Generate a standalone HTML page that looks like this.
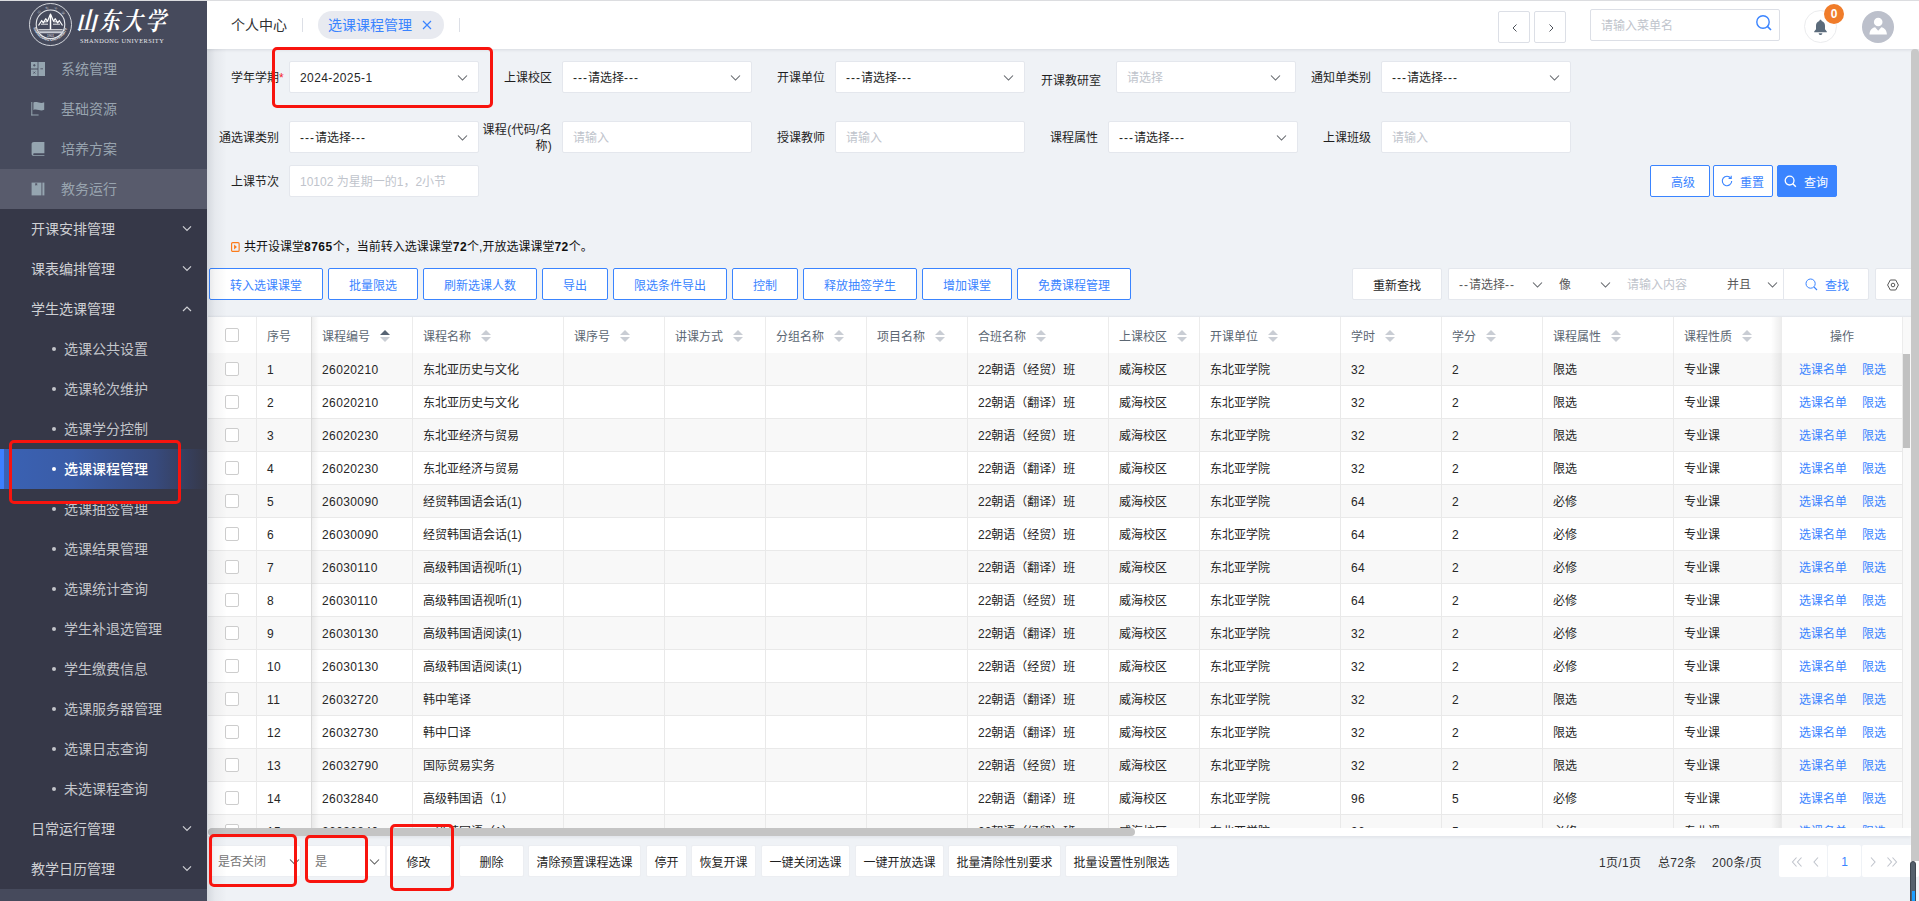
<!DOCTYPE html>
<html lang="zh-CN"><head><meta charset="utf-8"><title>选课课程管理</title>
<style>
*{box-sizing:border-box;margin:0;padding:0}
html,body{width:1919px;height:901px;overflow:hidden}
body{position:relative;background:#eff2f6;font-family:"Liberation Sans","Noto Sans CJK SC",sans-serif;font-size:12px;color:#262626}
.abs{position:absolute}
/* sidebar */
#side{position:absolute;left:0;top:0;width:207px;height:901px;background:#464a5c;overflow:hidden;z-index:30}
#sideshadow{position:absolute;left:207px;top:49px;width:20px;height:852px;background:linear-gradient(90deg,rgba(0,10,30,.11),rgba(0,10,30,.04) 40%,rgba(0,10,30,0));z-index:20}
#topline{position:absolute;left:0;top:0;width:1919px;height:1px;background:#dcdde0;z-index:50}
.logo-c{position:absolute;left:29px;top:3px;width:43px;height:43px}
.logo-t{position:absolute;left:77px;top:5px;width:96px;height:32px;color:#fff;font-family:"Liberation Serif","Noto Serif CJK SC",serif;font-weight:700;font-size:20px;line-height:32px;white-space:nowrap;transform:skewX(-14deg) scaleY(1.25);transform-origin:50% 50%}
.logo-t span{display:inline-block;width:23px;text-align:center}
.logo-e{position:absolute;left:80px;top:37px;width:88px;color:#e6e8ec;font-family:"Liberation Serif",serif;font-weight:normal;font-size:6.3px;line-height:8px;white-space:nowrap;letter-spacing:.5px}
.m1{position:absolute;left:0;width:207px;height:40px;color:#98a4af;font-size:14px;line-height:40px}
.m1 svg{position:absolute;left:31px;top:13px;width:14px;height:14px}
.m1 span{position:absolute;left:61px;top:0}
.m1.act{background:#585b6c}
#sub{position:absolute;left:0;top:209px;width:207px;height:680px;background:#363848}
.m2{position:absolute;left:0;width:207px;height:40px;color:#cfd0d4;font-size:14px;line-height:40px}
.m2 span{position:absolute;left:31px;top:0}
.m2 svg{position:absolute;left:182px;top:15px;width:10px;height:10px}
.m3{position:absolute;left:0;width:207px;height:40px;color:#c3c5ca;font-size:14px;line-height:40px}
.m3 span{position:absolute;left:64px;top:0}
.m3 i{position:absolute;left:52px;top:18px;width:4px;height:4px;border-radius:50%;background:#c3c5ca}
.m3.act{color:#fff;font-weight:500;background:linear-gradient(90deg,#3a62b5 0%,#3a5ca6 35%,#374a7d 75%,#363848 100%)}
.m3.act i{background:#fff}
.m3.act b{position:absolute;left:0;top:0;width:4px;height:40px;background:#3d7fff}
/* header */
#hdr{position:absolute;left:207px;top:0;width:1712px;height:49px;background:#fff;box-shadow:0 1px 3px rgba(0,21,41,.10)}
.tab0{position:absolute;left:24px;top:0;line-height:50px;font-size:14px;color:#303133}
.vsep{position:absolute;top:18px;width:1px;height:14px;background:#dcdfe6}
.tab1{position:absolute;left:111px;top:11px;width:126px;height:28px;border-radius:14px;background:#e8eaf0;color:#3a84ff;font-size:14px;line-height:28px;padding-left:10px;white-space:nowrap}
.navb{position:absolute;top:11px;width:32px;height:32px;border:1px solid #dcdfe6;border-radius:2px;background:#fff}
.navb svg{position:absolute;left:10px;top:10px;width:12px;height:12px}
.msearch{position:absolute;left:1383px;top:9px;width:190px;height:32px;border:1px solid #dcdfe6;border-radius:2px;background:#fff;color:#c0c4cc;font-size:12px;line-height:32px;padding-left:10px}
.msearch svg{position:absolute;left:164px;top:4px;width:18px;height:18px}
.bell{position:absolute;left:1597px;top:10px;width:33px;height:33px;border:1px solid #ebecee;border-radius:50%;background:#fff}
.bell svg{position:absolute;left:8px;top:8px;width:15px;height:17px}
.badge{position:absolute;left:1617px;top:4px;width:20px;height:20px;border-radius:50%;background:#f07c2a;color:#fff;font-size:12px;font-weight:bold;line-height:20px;text-align:center}
.avatar{position:absolute;left:1655px;top:11px;width:32px;height:32px;border-radius:50%;background:#bcc0cb;overflow:hidden}
/* filters */
.lbl{position:absolute;font-size:12px;color:#1f1f1f;line-height:16px;text-align:right;white-space:nowrap}
.fld{position:absolute;height:32px;width:190px;background:#fff;border:1px solid #e4e7ed;border-radius:2px;font-size:12px;line-height:32px;padding-left:10px;color:#262626;white-space:nowrap}
.fld.ph{color:#c0c4cc}
.fld svg.dn{position:absolute;right:10px;top:10px;width:11px;height:11px}
.btn{position:absolute;height:32px;border:1px solid #3a84ff;border-radius:2px;background:#fff;color:#3a84ff;font-size:12px;line-height:30px;padding-top:2px;text-align:center;white-space:nowrap}
.btn.pri{background:#3a84ff;color:#fff}
.btn.def{border-color:#e4e7ed;color:#1f1f1f}
.info{position:absolute;left:244px;top:239px;font-size:12px;line-height:16px;color:#111;white-space:nowrap}
.info b{font-weight:bold;letter-spacing:.5px}
/* table */
.tablewrap{position:absolute;left:208px;top:317px;width:1695px;height:511px;overflow:hidden;background:#fff}
#tblshadow{position:absolute;left:208px;top:315px;width:1703px;height:2px;background:linear-gradient(180deg,rgba(0,10,30,0),rgba(0,10,30,.06))}
table.grid{border-collapse:separate;border-spacing:0;table-layout:fixed;width:1695px}
.grid th{height:36px;line-height:16px;padding-top:3px;background:#fff;color:#5c6773;font-weight:normal;font-size:12px;text-align:left;padding-left:10px;border-right:1px solid #ececec;border-bottom:0;white-space:nowrap;position:relative}
.grid td{height:33px;line-height:16px;padding-top:2px;font-size:12px;color:#262626;padding-left:10px;border-right:1px solid #e9e9e9;border-bottom:1px solid #e9e9e9;white-space:nowrap;overflow:hidden}
.grid tr.odd td{background:#f8f8f8}
.grid tr.even td{background:#fff}
.grid .ck{padding-left:0;text-align:center}
.cb{position:relative;top:-2px;display:inline-block;width:14px;height:14px;border:1px solid #cdcdcd;border-radius:2px;background:#fff;vertical-align:middle}
.grid th.op{text-align:center;padding-left:0}
.grid td.op{padding-left:17px;color:#3a84ff}
.grid td.op a{margin-right:15px}
.sort{display:inline-block;position:relative;width:10px;height:14px;margin-left:10px;vertical-align:-3px}
.sort i{position:absolute;left:0;width:0;height:0;border-left:5px solid transparent;border-right:5px solid transparent}
.sort .su{top:0px;border-bottom:5.5px solid #c9cdd4}
.sort .sd{top:7.5px;border-top:5.5px solid #c9cdd4}
.red{position:absolute;border:3px solid #f8140e;border-radius:5px;z-index:60}
.hy{letter-spacing:1px}
.nm{letter-spacing:.4px}

</style></head><body>
<div id="topline"></div>
<div id="side">
<svg class="logo-c" viewBox="0 0 43 43"><defs><path id="ringb" d="M4.300 22.500A17.300 17.300 0 0 0 38.700 22.500"/><path id="ringt" d="M6.200 17.500A16 16 0 0 1 36.800 17.500"/></defs><circle cx="21.500" cy="21.500" r="21" fill="none" stroke="#e3e5ea" stroke-width=".9"/><circle cx="21.500" cy="21.300" r="14.300" fill="none" stroke="#e3e5ea" stroke-width="1.100"/><text font-family="Liberation Sans,sans-serif" font-size="3.700" font-weight="bold" fill="#f0f1f4" letter-spacing=".05"><textPath href="#ringb" startOffset="2">SHANDONG UNIVERSITY</textPath></text><text font-family="Noto Serif CJK SC,serif" font-size="3.600" fill="#d5d8df" letter-spacing="4.500"><textPath href="#ringt" startOffset="7">山东大学</textPath></text><path d="M9.500 22.500l3.200-5 1.600 2.400 2.400-4.200 1.800 2.600 3-7.300 3 7.300 1.800-2.600 2.400 4.200 1.600-2.400 3.200 5" fill="none" stroke="#fff" stroke-width="1.200" stroke-linejoin="round"/><path d="M12 21.200h7M24 21.200h7M14.500 18.800h4M24.500 18.800h4" stroke="#fff" stroke-width=".9" fill="none"/><path d="M21.500 12.500V26.500" stroke="#fff" stroke-width="1.500"/><path d="M9.300 26.800H33.700" stroke="#fff" stroke-width="1"/><path d="M9.800 28.300H33.200V30.200H11z" fill="#c9ccd5"/><text x="21.500" y="34.300" text-anchor="middle" font-family="Liberation Sans,sans-serif" font-size="3.200" fill="#e3e5ea">1901</text></svg>
<div class="logo-t"><span>山</span><span>东</span><span>大</span><span>学</span></div>
<div class="logo-e">SHANDONG UNIVERSITY</div>
<div class="m1" style="top:49px"><svg viewBox="0 0 14 14"><path d="M0 0h6.6v6.6H0zM7.4 0H14v14H7.4zM0 7.4h6.6V14H0z" fill="#95a5b0"/><path d="M2 3.3h2.6M3.3 2v2.6M9.4 6.8h2.6M2.3 9.6l2 2M4.3 9.6l-2 2" stroke="#464a5c" stroke-width=".8" fill="none"/></svg><span>系统管理</span></div>
<div class="m1" style="top:89px"><svg viewBox="0 0 14 14"><path d="M0.8 0V13.4" stroke="#95a5b0" stroke-width="1" fill="none"/><path d="M0.3 13H7.6" stroke="#95a5b0" stroke-width="1" fill="none"/><path d="M2.4 0.4c2-.9 3.6-.4 5.4.1 1.8.5 3.6.6 5.4-.3v7.6c-1.8.9-3.6.8-5.4.3-1.8-.5-3.400-1-5.400-.1z" fill="#95a5b0"/></svg><span>基础资源</span></div>
<div class="m1" style="top:129px"><svg viewBox="0 0 14 14"><path d="M3 0h10.4v11.2H3.4c-.9 0-1.2.5-1.2 1 0 .6.4 1 1.2 1h10v.8H3c-1.5 0-2.4-.8-2.4-2V2C.6.8 1.5 0 3 0z" fill="#95a5b0"/></svg><span>培养方案</span></div>
<div class="m1 act" style="top:169px"><svg viewBox="0 0 14 14"><path d="M0.6 0.6h9.8v12.8H0.6z" fill="#95a5b0"/><path d="M11.4 0.6h2v12.8h-2z" fill="#95a5b0"/><path d="M4.2 1.2v2.6l1-.8 1 .8V1.2z" fill="#585b6c"/></svg><span>教务运行</span></div>
<div id="sub"></div>
<div class="m2" style="top:209px"><span>开课安排管理</span><svg viewBox="0 0 10 10"><path d="M1 2.300l4 4 4-4" fill="none" stroke="#cfd0d4" stroke-width="1.200"/></svg></div>
<div class="m2" style="top:249px"><span>课表编排管理</span><svg viewBox="0 0 10 10"><path d="M1 2.300l4 4 4-4" fill="none" stroke="#cfd0d4" stroke-width="1.200"/></svg></div>
<div class="m2" style="top:289px"><span>学生选课管理</span><svg viewBox="0 0 10 10"><path d="M1 7l4-4 4 4" fill="none" stroke="#cfd0d4" stroke-width="1.200"/></svg></div>
<div class="m3" style="top:329px"><i></i><span>选课公共设置</span></div>
<div class="m3" style="top:369px"><i></i><span>选课轮次维护</span></div>
<div class="m3" style="top:409px"><i></i><span>选课学分控制</span></div>
<div class="m3 act" style="top:449px"><b></b><i></i><span>选课课程管理</span></div>
<div class="m3" style="top:489px"><i></i><span>选课抽签管理</span></div>
<div class="m3" style="top:529px"><i></i><span>选课结果管理</span></div>
<div class="m3" style="top:569px"><i></i><span>选课统计查询</span></div>
<div class="m3" style="top:609px"><i></i><span>学生补退选管理</span></div>
<div class="m3" style="top:649px"><i></i><span>学生缴费信息</span></div>
<div class="m3" style="top:689px"><i></i><span>选课服务器管理</span></div>
<div class="m3" style="top:729px"><i></i><span>选课日志查询</span></div>
<div class="m3" style="top:769px"><i></i><span>未选课程查询</span></div>
<div class="m2" style="top:809px"><span>日常运行管理</span><svg viewBox="0 0 10 10"><path d="M1 2.300l4 4 4-4" fill="none" stroke="#cfd0d4" stroke-width="1.200"/></svg></div>
<div class="m2" style="top:849px"><span>教学日历管理</span><svg viewBox="0 0 10 10"><path d="M1 2.300l4 4 4-4" fill="none" stroke="#cfd0d4" stroke-width="1.200"/></svg></div>
</div>
<div id="hdr">
<div class="tab0">个人中心</div>
<div class="vsep" style="left:95px"></div>
<div class="tab1">选课课程管理<svg style="position:absolute;left:104px;top:9px;width:10px;height:10px" viewBox="0 0 10 10"><path d="M1 1l8 8M9 1l-8 8" stroke="#3a84ff" stroke-width="1.2" fill="none"/></svg></div>
<div class="vsep" style="left:252px"></div>
<div class="navb" style="left:1291px"><svg viewBox="0 0 12 12"><path d="M7.5 2.5L4 6l3.5 3.5" fill="none" stroke="#50555d" stroke-width="1"/></svg></div>
<div class="navb" style="left:1327px"><svg viewBox="0 0 12 12"><path d="M4.5 2.5L8 6 4.5 9.5" fill="none" stroke="#50555d" stroke-width="1"/></svg></div>
<div class="msearch">请输入菜单名<svg viewBox="0 0 18 18"><circle cx="8" cy="8" r="6.2" fill="none" stroke="#3a84ff" stroke-width="1.4"/><path d="M12.6 12.6L16 16" stroke="#3a84ff" stroke-width="1.6" fill="none"/></svg></div>
<div class="bell"><svg viewBox="0 0 15 17"><path d="M7.5 0.8c.7 0 1.1.5 1.1 1.1 2.2.6 3.4 2.4 3.4 4.8v3.6l1.8 2.2v.7H1.2v-.7L3 10.3V6.7c0-2.4 1.200-4.200 3.400-4.800 0-.6.400-1.100 1.100-1.100z" fill="#5b6b7b"/><path d="M5.700 14.200h3.600c0 1-.8 1.800-1.800 1.800s-1.800-.8-1.800-1.800z" fill="#5b6b7b"/></svg></div>
<div class="badge">0</div>
<div class="avatar"><svg viewBox="0 0 32 32" width="32" height="32"><circle cx="16.200" cy="11" r="4.300" fill="#fff"/><path d="M7.500 23.500c0-4 2.500-6.600 5.600-7.200l3.100 3.400 3.100-3.400c3.100.6 5.600 3.200 5.600 7.200z" fill="#fff"/></svg></div>
</div>
<div class="lbl" style="right:1640px;top:70px">学年学期</div>
<div class="lbl" style="left:279px;top:70px;color:#f5222d">*</div>
<div class="fld" style="left:289px;top:61px;width:190px"><span class="nm">2024-2025-1</span><svg class="dn" viewBox="0 0 11 11"><path d="M1 3.500l4.500 4.500 4.500-4.500" fill="none" stroke="#5f6368" stroke-width="1.05"/></svg></div>
<div class="lbl" style="right:1367px;top:70px">上课校区</div>
<div class="fld" style="left:562px;top:61px;width:190px"><span class="hy">---</span>请选择<span class="hy">---</span><svg class="dn" viewBox="0 0 11 11"><path d="M1 3.500l4.500 4.500 4.500-4.500" fill="none" stroke="#5f6368" stroke-width="1.05"/></svg></div>
<div class="lbl" style="right:1094px;top:70px">开课单位</div>
<div class="fld" style="left:835px;top:61px;width:190px"><span class="hy">---</span>请选择<span class="hy">---</span><svg class="dn" viewBox="0 0 11 11"><path d="M1 3.500l4.500 4.500 4.500-4.500" fill="none" stroke="#5f6368" stroke-width="1.05"/></svg></div>
<div class="lbl" style="right:818px;top:73px">开课教研室</div>
<div class="fld ph" style="left:1116px;top:61px;width:180px">请选择<svg class="dn" style="right:14px" viewBox="0 0 11 11"><path d="M1 3.500l4.500 4.500 4.500-4.500" fill="none" stroke="#5f6368" stroke-width="1.05"/></svg></div>
<div class="lbl" style="right:548px;top:70px">通知单类别</div>
<div class="fld" style="left:1381px;top:61px;width:190px"><span class="hy">---</span>请选择<span class="hy">---</span><svg class="dn" viewBox="0 0 11 11"><path d="M1 3.500l4.500 4.500 4.500-4.500" fill="none" stroke="#5f6368" stroke-width="1.05"/></svg></div>
<div class="lbl" style="right:1640px;top:130px">通选课类别</div>
<div class="fld" style="left:289px;top:121px;width:190px"><span class="hy">---</span>请选择<span class="hy">---</span><svg class="dn" viewBox="0 0 11 11"><path d="M1 3.500l4.500 4.500 4.500-4.500" fill="none" stroke="#5f6368" stroke-width="1.05"/></svg></div>
<div class="lbl" style="right:1367px;top:122px;width:76px;white-space:normal;letter-spacing:.3px">课程(代码/名称)</div>
<div class="fld ph" style="left:562px;top:121px;width:190px">请输入</div>
<div class="lbl" style="right:1094px;top:130px">授课教师</div>
<div class="fld ph" style="left:835px;top:121px;width:190px">请输入</div>
<div class="lbl" style="right:821px;top:130px">课程属性</div>
<div class="fld" style="left:1108px;top:121px;width:190px"><span class="hy">---</span>请选择<span class="hy">---</span><svg class="dn" viewBox="0 0 11 11"><path d="M1 3.500l4.500 4.500 4.500-4.500" fill="none" stroke="#5f6368" stroke-width="1.05"/></svg></div>
<div class="lbl" style="right:548px;top:130px">上课班级</div>
<div class="fld ph" style="left:1381px;top:121px;width:190px">请输入</div>
<div class="lbl" style="right:1640px;top:174px">上课节次</div>
<div class="fld ph" style="left:289px;top:165px;width:190px">10102 为星期一的1，2小节</div>
<div class="btn" style="left:1650px;top:165px;width:60px;padding-left:6px">高级</div>
<div class="btn" style="left:1713px;top:165px;width:60px"><svg style="position:absolute;left:7px;top:9px;width:12px;height:12px" viewBox="0 0 12 12"><path d="M9.800 3.200A4.700 4.700 0 1 0 10.700 6" fill="none" stroke="#3a84ff" stroke-width="1.1"/><path d="M7.600 3.400h2.600V.8" fill="none" stroke="#3a84ff" stroke-width="1.1"/></svg><span style="margin-left:18px">重置</span></div>
<div class="btn pri" style="left:1777px;top:165px;width:60px"><svg style="position:absolute;left:6px;top:9px;width:13px;height:13px" viewBox="0 0 13 13"><circle cx="5.600" cy="5.600" r="4.400" fill="none" stroke="#fff" stroke-width="1.300"/><path d="M8.800 8.800l3 3" stroke="#fff" stroke-width="1.400"/></svg><span style="margin-left:18px">查询</span></div>
<svg class="abs" style="left:231px;top:242px;width:9px;height:10px" viewBox="0 0 10 10" preserveAspectRatio="none"><rect x=".65" y=".65" width="8.400" height="8.700" rx="1.200" fill="none" stroke="#fb7c1c" stroke-width="1.300"/><path d="M3.400 2.400l3.200 2.600-3.200 2.600z" fill="#fb7c1c"/></svg>
<div class="info">共开设课堂<b>8765</b>个，当前转入选课课堂<b>72</b>个,开放选课课堂<b>72</b>个。</div>
<div class="btn" style="left:209px;top:268px;width:114px">转入选课课堂</div>
<div class="btn" style="left:328px;top:268px;width:90px">批量限选</div>
<div class="btn" style="left:423px;top:268px;width:114px">刷新选课人数</div>
<div class="btn" style="left:542px;top:268px;width:66px">导出</div>
<div class="btn" style="left:613px;top:268px;width:114px">限选条件导出</div>
<div class="btn" style="left:732px;top:268px;width:66px">控制</div>
<div class="btn" style="left:803px;top:268px;width:114px">释放抽签学生</div>
<div class="btn" style="left:922px;top:268px;width:90px">增加课堂</div>
<div class="btn" style="left:1017px;top:268px;width:114px">免费课程管理</div>
<div class="btn def" style="left:1352px;top:268px;width:90px">重新查找</div>
<div class="fld" style="left:1448px;top:268px;width:101px;color:#595959;border-radius:2px 0 0 2px;border-right:0"><span class="hy">--</span>请选择<span class="hy">--</span><svg class="dn" style="right:6px" viewBox="0 0 11 11"><path d="M1 3.500l4.500 4.500 4.500-4.500" fill="none" stroke="#5f6368" stroke-width="1.05"/></svg></div>
<div class="fld" style="left:1549px;top:268px;width:68px;color:#595959;border-radius:0;border-left:0;border-right:0">像<svg class="dn" style="right:6px" viewBox="0 0 11 11"><path d="M1 3.500l4.500 4.500 4.500-4.500" fill="none" stroke="#5f6368" stroke-width="1.05"/></svg></div>
<div class="fld ph" style="left:1617px;top:268px;width:100px;border-radius:0;border-left:0;border-right:0">请输入内容</div>
<div class="fld" style="left:1717px;top:268px;width:67px;color:#595959;border-radius:0;border-left:0;border-right:0">并且<svg class="dn" style="right:6px" viewBox="0 0 11 11"><path d="M1 3.500l4.500 4.500 4.500-4.500" fill="none" stroke="#5f6368" stroke-width="1.05"/></svg></div>
<div class="btn def" style="left:1783px;top:268px;width:86px;color:#3a84ff;border-radius:0 2px 2px 0"><svg style="position:absolute;left:21px;top:9px;width:13px;height:13px" viewBox="0 0 13 13"><circle cx="5.600" cy="5.600" r="4.600" fill="none" stroke="#3a84ff" stroke-width="1"/><path d="M9 9l3 3" stroke="#3a84ff" stroke-width="1.100"/></svg><span style="margin-left:22px">查找</span></div>
<div class="btn def" style="left:1875px;top:268px;width:40px"><svg style="position:absolute;left:11px;top:10px;width:12px;height:12px" viewBox="0 0 12 12"><path d="M3.300 1h5.400l2.700 5-2.700 5H3.300L.6 6z" fill="none" stroke="#595959" stroke-width="1"/><circle cx="6" cy="6" r="1.800" fill="none" stroke="#595959" stroke-width="1"/></svg></div>
<div class="tablewrap"><table class="grid"><colgroup><col style="width:49px"><col style="width:55px"><col style="width:101px"><col style="width:151px"><col style="width:101px"><col style="width:101px"><col style="width:101px"><col style="width:101px"><col style="width:141px"><col style="width:91px"><col style="width:141px"><col style="width:101px"><col style="width:101px"><col style="width:131px"><col style="width:108px"><col style="width:121px"></colgroup><thead><tr><th class="ck"><span class="cb"></span></th><th>序号</th><th>课程编号<span class="sort"><i class="su" style="border-bottom-color:#566373"></i><i class="sd"></i></span></th><th>课程名称<span class="sort"><i class="su" style="border-bottom-color:#c9cdd4"></i><i class="sd"></i></span></th><th>课序号<span class="sort"><i class="su" style="border-bottom-color:#c9cdd4"></i><i class="sd"></i></span></th><th>讲课方式<span class="sort"><i class="su" style="border-bottom-color:#c9cdd4"></i><i class="sd"></i></span></th><th>分组名称<span class="sort"><i class="su" style="border-bottom-color:#c9cdd4"></i><i class="sd"></i></span></th><th>项目名称<span class="sort"><i class="su" style="border-bottom-color:#c9cdd4"></i><i class="sd"></i></span></th><th>合班名称<span class="sort"><i class="su" style="border-bottom-color:#c9cdd4"></i><i class="sd"></i></span></th><th>上课校区<span class="sort"><i class="su" style="border-bottom-color:#c9cdd4"></i><i class="sd"></i></span></th><th>开课单位<span class="sort"><i class="su" style="border-bottom-color:#c9cdd4"></i><i class="sd"></i></span></th><th>学时<span class="sort"><i class="su" style="border-bottom-color:#c9cdd4"></i><i class="sd"></i></span></th><th>学分<span class="sort"><i class="su" style="border-bottom-color:#c9cdd4"></i><i class="sd"></i></span></th><th>课程属性<span class="sort"><i class="su" style="border-bottom-color:#c9cdd4"></i><i class="sd"></i></span></th><th>课程性质<span class="sort"><i class="su" style="border-bottom-color:#c9cdd4"></i><i class="sd"></i></span></th><th class="op">操作</th></tr></thead><tbody><tr class="odd"><td class="ck"><span class="cb"></span></td><td class="nm">1</td><td class="nm">26020210</td><td>东北亚历史与文化</td><td></td><td></td><td></td><td></td><td>22朝语（经贸）班</td><td>威海校区</td><td>东北亚学院</td><td class="nm">32</td><td class="nm">2</td><td>限选</td><td>专业课</td><td class="op"><a>选课名单</a><a>限选</a></td></tr>
<tr class="even"><td class="ck"><span class="cb"></span></td><td class="nm">2</td><td class="nm">26020210</td><td>东北亚历史与文化</td><td></td><td></td><td></td><td></td><td>22朝语（翻译）班</td><td>威海校区</td><td>东北亚学院</td><td class="nm">32</td><td class="nm">2</td><td>限选</td><td>专业课</td><td class="op"><a>选课名单</a><a>限选</a></td></tr>
<tr class="odd"><td class="ck"><span class="cb"></span></td><td class="nm">3</td><td class="nm">26020230</td><td>东北亚经济与贸易</td><td></td><td></td><td></td><td></td><td>22朝语（经贸）班</td><td>威海校区</td><td>东北亚学院</td><td class="nm">32</td><td class="nm">2</td><td>限选</td><td>专业课</td><td class="op"><a>选课名单</a><a>限选</a></td></tr>
<tr class="even"><td class="ck"><span class="cb"></span></td><td class="nm">4</td><td class="nm">26020230</td><td>东北亚经济与贸易</td><td></td><td></td><td></td><td></td><td>22朝语（翻译）班</td><td>威海校区</td><td>东北亚学院</td><td class="nm">32</td><td class="nm">2</td><td>限选</td><td>专业课</td><td class="op"><a>选课名单</a><a>限选</a></td></tr>
<tr class="odd"><td class="ck"><span class="cb"></span></td><td class="nm">5</td><td class="nm">26030090</td><td>经贸韩国语会话(1)</td><td></td><td></td><td></td><td></td><td>22朝语（翻译）班</td><td>威海校区</td><td>东北亚学院</td><td class="nm">64</td><td class="nm">2</td><td>必修</td><td>专业课</td><td class="op"><a>选课名单</a><a>限选</a></td></tr>
<tr class="even"><td class="ck"><span class="cb"></span></td><td class="nm">6</td><td class="nm">26030090</td><td>经贸韩国语会话(1)</td><td></td><td></td><td></td><td></td><td>22朝语（经贸）班</td><td>威海校区</td><td>东北亚学院</td><td class="nm">64</td><td class="nm">2</td><td>必修</td><td>专业课</td><td class="op"><a>选课名单</a><a>限选</a></td></tr>
<tr class="odd"><td class="ck"><span class="cb"></span></td><td class="nm">7</td><td class="nm">26030110</td><td>高级韩国语视听(1)</td><td></td><td></td><td></td><td></td><td>22朝语（翻译）班</td><td>威海校区</td><td>东北亚学院</td><td class="nm">64</td><td class="nm">2</td><td>必修</td><td>专业课</td><td class="op"><a>选课名单</a><a>限选</a></td></tr>
<tr class="even"><td class="ck"><span class="cb"></span></td><td class="nm">8</td><td class="nm">26030110</td><td>高级韩国语视听(1)</td><td></td><td></td><td></td><td></td><td>22朝语（经贸）班</td><td>威海校区</td><td>东北亚学院</td><td class="nm">64</td><td class="nm">2</td><td>必修</td><td>专业课</td><td class="op"><a>选课名单</a><a>限选</a></td></tr>
<tr class="odd"><td class="ck"><span class="cb"></span></td><td class="nm">9</td><td class="nm">26030130</td><td>高级韩国语阅读(1)</td><td></td><td></td><td></td><td></td><td>22朝语（翻译）班</td><td>威海校区</td><td>东北亚学院</td><td class="nm">32</td><td class="nm">2</td><td>必修</td><td>专业课</td><td class="op"><a>选课名单</a><a>限选</a></td></tr>
<tr class="even"><td class="ck"><span class="cb"></span></td><td class="nm">10</td><td class="nm">26030130</td><td>高级韩国语阅读(1)</td><td></td><td></td><td></td><td></td><td>22朝语（经贸）班</td><td>威海校区</td><td>东北亚学院</td><td class="nm">32</td><td class="nm">2</td><td>必修</td><td>专业课</td><td class="op"><a>选课名单</a><a>限选</a></td></tr>
<tr class="odd"><td class="ck"><span class="cb"></span></td><td class="nm">11</td><td class="nm">26032720</td><td>韩中笔译</td><td></td><td></td><td></td><td></td><td>22朝语（翻译）班</td><td>威海校区</td><td>东北亚学院</td><td class="nm">32</td><td class="nm">2</td><td>限选</td><td>专业课</td><td class="op"><a>选课名单</a><a>限选</a></td></tr>
<tr class="even"><td class="ck"><span class="cb"></span></td><td class="nm">12</td><td class="nm">26032730</td><td>韩中口译</td><td></td><td></td><td></td><td></td><td>22朝语（翻译）班</td><td>威海校区</td><td>东北亚学院</td><td class="nm">32</td><td class="nm">2</td><td>限选</td><td>专业课</td><td class="op"><a>选课名单</a><a>限选</a></td></tr>
<tr class="odd"><td class="ck"><span class="cb"></span></td><td class="nm">13</td><td class="nm">26032790</td><td>国际贸易实务</td><td></td><td></td><td></td><td></td><td>22朝语（经贸）班</td><td>威海校区</td><td>东北亚学院</td><td class="nm">32</td><td class="nm">2</td><td>限选</td><td>专业课</td><td class="op"><a>选课名单</a><a>限选</a></td></tr>
<tr class="even"><td class="ck"><span class="cb"></span></td><td class="nm">14</td><td class="nm">26032840</td><td>高级韩国语（1）</td><td></td><td></td><td></td><td></td><td>22朝语（翻译）班</td><td>威海校区</td><td>东北亚学院</td><td class="nm">96</td><td class="nm">5</td><td>必修</td><td>专业课</td><td class="op"><a>选课名单</a><a>限选</a></td></tr>
<tr class="odd"><td class="ck"><span class="cb"></span></td><td class="nm">15</td><td class="nm">26032840</td><td>高级韩国语（1）</td><td></td><td></td><td></td><td></td><td>22朝语（经贸）班</td><td>威海校区</td><td>东北亚学院</td><td class="nm">96</td><td class="nm">5</td><td>必修</td><td>专业课</td><td class="op"><a>选课名单</a><a>限选</a></td></tr>
</tbody></table></div>
<div id="sideshadow"></div><div id="tblshadow"></div>
<div class="abs" style="left:311px;top:317px;width:8px;height:511px;background:linear-gradient(90deg,rgba(0,0,0,.07),rgba(0,0,0,0));z-index:5"></div>
<div class="abs" style="left:1771px;top:317px;width:10px;height:511px;background:linear-gradient(270deg,rgba(0,0,0,.07),rgba(0,0,0,0));z-index:5"></div>
<div class="abs" style="left:208px;top:828px;width:1703px;height:8px;background:#fff;box-shadow:0 2px 3px rgba(0,10,30,.05);z-index:6"></div>
<div class="abs" style="left:208px;top:828px;width:927px;height:8px;border-radius:4px;background:#c4c4c4;z-index:7"></div>
<div class="abs" style="left:1903px;top:317px;width:8px;height:511px;background:#f9f9f9;z-index:6"></div>
<div class="abs" style="left:1903px;top:354px;width:7px;height:94px;background:#c1c1c1;z-index:7"></div>
<div class="fld" style="left:209px;top:845px;width:92px;padding-left:8px;color:#757575;border-color:#eceef2">是否关闭<svg class="dn" style="right:0px" viewBox="0 0 11 11"><path d="M1 3.500l4.500 4.500 4.500-4.500" fill="none" stroke="#595959" stroke-width="1.05"/></svg></div>
<div class="fld" style="left:306px;top:845px;width:80px;padding-left:8px;color:#757575;border-color:#eceef2">是<svg class="dn" style="right:5px" viewBox="0 0 11 11"><path d="M1 3.500l4.500 4.500 4.500-4.500" fill="none" stroke="#595959" stroke-width="1.05"/></svg></div>
<div class="btn def" style="left:386px;top:845px;width:65px;border-color:#eceef2">修改</div>
<div class="btn def" style="left:459px;top:845px;width:65px;border-color:#eceef2">删除</div>
<div class="btn def" style="left:528px;top:845px;width:113px;border-color:#eceef2">清除预置课程选课</div>
<div class="btn def" style="left:646px;top:845px;width:41px;border-color:#eceef2">停开</div>
<div class="btn def" style="left:691px;top:845px;width:65px;border-color:#eceef2">恢复开课</div>
<div class="btn def" style="left:761px;top:845px;width:89px;border-color:#eceef2">一键关闭选课</div>
<div class="btn def" style="left:855px;top:845px;width:89px;border-color:#eceef2">一键开放选课</div>
<div class="btn def" style="left:948px;top:845px;width:113px;border-color:#eceef2">批量清除性别要求</div>
<div class="btn def" style="left:1065px;top:845px;width:113px;border-color:#eceef2">批量设置性别限选</div>
<div class="lbl" style="left:1599px;top:855px;color:#303133;letter-spacing:.3px">1页/1页</div>
<div class="lbl" style="left:1658px;top:855px;color:#303133;letter-spacing:.3px">总72条</div>
<div class="lbl" style="left:1712px;top:855px;color:#303133;letter-spacing:.5px">200条/页</div>
<div class="abs" style="left:1779px;top:845px;width:48px;height:32px;background:#fff;border-radius:2px"></div>
<div class="abs" style="left:1828px;top:845px;width:33px;height:32px;background:#fff;border-radius:2px;color:#3a84ff;text-align:center;line-height:35px;font-size:12px">1</div>
<div class="abs" style="left:1862px;top:845px;width:57px;height:32px;background:#fff;border-radius:2px"></div>
<svg class="abs" style="left:1791px;top:856px;width:12px;height:12px" viewBox="0 0 12 12"><path d="M5.500 1.500L1.500 6l4 4.500M10.500 1.500L6.500 6l4 4.500" fill="none" stroke="#c0c4cc" stroke-width="1.100"/></svg>
<svg class="abs" style="left:1810px;top:856px;width:12px;height:12px" viewBox="0 0 12 12"><path d="M8 1.500L4 6l4 4.500" fill="none" stroke="#c0c4cc" stroke-width="1.100"/></svg>
<svg class="abs" style="left:1867px;top:856px;width:12px;height:12px" viewBox="0 0 12 12"><path d="M4 1.500L8 6l-4 4.500" fill="none" stroke="#c0c4cc" stroke-width="1.100"/></svg>
<svg class="abs" style="left:1886px;top:856px;width:12px;height:12px" viewBox="0 0 12 12"><path d="M1.500 1.500L5.500 6l-4 4.500M6.500 1.500L10.500 6l-4 4.500" fill="none" stroke="#c0c4cc" stroke-width="1.100"/></svg>
<div class="abs" style="left:1911px;top:49px;width:8px;height:812px;background:#c8c8c8;border-radius:4px 4px 0 0;z-index:40"></div>
<div class="abs" style="left:1910px;top:861px;width:6px;height:44px;border-radius:3px 3px 0 0;background:#56616d;border:1px solid #3f4750;z-index:41"></div>
<div class="abs" style="left:1912px;top:891px;width:3px;height:10px;background:#1e9fff;z-index:42"></div>
<div class="red" style="left:272px;top:47px;width:221px;height:61px"></div>
<div class="red" style="left:9px;top:440px;width:172px;height:64px"></div>
<div class="red" style="left:209px;top:834px;width:88px;height:53px"></div>
<div class="red" style="left:305px;top:835px;width:63px;height:48px"></div>
<div class="red" style="left:390px;top:824px;width:64px;height:67px"></div>
</body></html>
